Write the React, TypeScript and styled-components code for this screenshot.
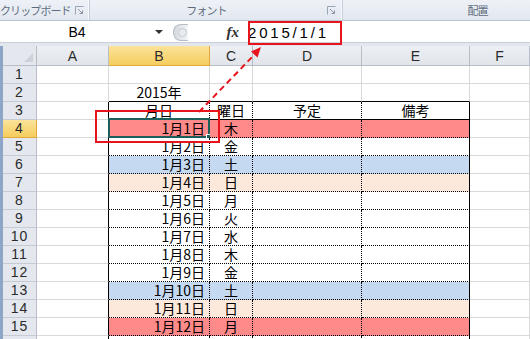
import React from "react";
import styled, { createGlobalStyle } from "styled-components";

const GlobalStyle = createGlobalStyle`
  html, body {
    margin: 0;
    padding: 0;
    background: #fff;
    overflow: hidden;
  }
`;

const Window = styled.div`
  position: relative;
  width: 530px;
  height: 339px;
  overflow: hidden;
  background: #fff;
  font-family: "Liberation Sans", "Noto Sans CJK JP", sans-serif;
`;

const Ribbon = styled.div`
  display: flex;
  height: 21px;
  box-sizing: border-box;
  background: linear-gradient(#eef2f7, #e2e8f0);
  border-bottom: 1px solid #b9c4d2;
  overflow: hidden;
`;

const RibbonGroup = styled.div<{ $w: number }>`
  flex: none;
  width: ${p => p.$w}px;
  display: flex;
  align-items: center;
  box-sizing: border-box;
  border-right: 1px solid #c3ccd8;
  box-shadow: inset -1px 0 0 #f7f9fc;
`;

const GroupLabel = styled.span`
  flex: 1;
  text-align: center;
  font-family: "Noto Sans CJK JP", sans-serif;
  font-size: 11px;
  letter-spacing: -0.9px;
  white-space: nowrap;
  color: #5f6c7e;
  line-height: 20px;
`;

const Launcher = styled.svg`
  flex: none;
  width: 9px;
  height: 9px;
  margin: 0 6px 0 4px;
`;

const FormulaBar = styled.div`
  display: flex;
  align-items: center;
  height: 25px;
  box-sizing: border-box;
  padding: 0 0 0 3px;
  background: #fff;
  border-bottom: 3px solid #e3e7ed;
  box-shadow: inset 0 -1px 0 #c9d0da;
`;

const NameBox = styled.div`
  display: flex;
  align-items: center;
  width: 170px;
  height: 18px;
  background: #fff;
`;

const NameText = styled.span`
  flex: 1;
  text-align: center;
  font-size: 14px;
  color: #000;
`;

const DropArrow = styled.span`
  width: 0;
  height: 0;
  margin: 0 10px 0 4px;
  border-left: 4px solid transparent;
  border-right: 4px solid transparent;
  border-top: 4px solid #333;
`;

const Splitter = styled.div`
  width: 14px;
  height: 15px;
  border-radius: 8px 0 0 8px;
  background: linear-gradient(90deg, #d4d9df, #f4f6f8);
  border: 1px solid #b6bec8;
  border-right: none;
  position: relative;
  &::after {
    content: "";
    position: absolute;
    left: 4px;
    top: 3px;
    width: 7px;
    height: 7px;
    border-radius: 50%;
    background: #e9ecef;
    border: 1px solid #c4cad2;
  }
`;

const FxLabel = styled.span`
  margin-left: auto;
  margin-right: -1px;
  font-family: "Liberation Serif", serif;
  font-style: italic;
  font-weight: bold;
  font-size: 15px;
  color: #333;
`;

const FormulaInput = styled.div`
  width: 282px;
  height: 18px;
  display: flex;
  align-items: center;
  padding-left: 10px;
  font-size: 15px;
  letter-spacing: 2.8px;
  color: #000;
`;

const Sheet = styled.div`
  display: grid;
  grid-template-columns: 34px 72px 101px 43px 109px 108px 60px;
  grid-auto-rows: 18px;
  grid-template-rows: 20px;
  border-left: 3px solid #8da5c6;
`;

const Corner = styled.div`
  position: relative;
  box-sizing: border-box;
  background: #e4e8ee;
  border-right: 1px solid #b7bec8;
  border-bottom: 1px solid #b7bec8;
  &::after {
    content: "";
    position: absolute;
    right: 3px;
    bottom: 3px;
    border-left: 9px solid transparent;
    border-bottom: 9px solid #cdd2d9;
  }
`;

const ColHeader = styled.div<{ $sel?: boolean }>`
  box-sizing: border-box;
  display: flex;
  align-items: center;
  justify-content: center;
  font-size: 14px;
  color: #2a2a2a;
  background: ${p => (p.$sel ? "linear-gradient(#fbe39a, #f6cd5e)" : "linear-gradient(#eceff3, #e1e5ea)")};
  border-right: 1px solid ${p => (p.$sel ? "#e0a93e" : "#b7bec8")};
  border-bottom: 1px solid ${p => (p.$sel ? "#e0a93e" : "#b7bec8")};
`;

const RowHeader = styled.div<{ $sel?: boolean }>`
  box-sizing: border-box;
  display: flex;
  align-items: center;
  justify-content: center;
  font-size: 14px;
  line-height: 17px;
  letter-spacing: 1px;
  overflow: hidden;
  color: #2a2a2a;
  background: ${p => (p.$sel ? "linear-gradient(#fbe39a, #f6cd5e)" : "#e4e8ee")};
  border-right: 1px solid ${p => (p.$sel ? "#e0a93e" : "#b7bec8")};
  border-bottom: 1px solid ${p => (p.$sel ? "#e0a93e" : "#c5cbd3")};
`;

type Line = "grid" | "dot" | "solid";
const lineCss = (l: Line) =>
  l === "solid" ? "1px solid #000" : l === "dot" ? "1px dotted #000" : "1px solid #d9d9d9";

const Cell = styled.div<{ $bg?: string; $r: Line; $b: Line; $align?: string }>`
  position: relative;
  box-sizing: border-box;
  display: flex;
  align-items: center;
  justify-content: ${p => p.$align ?? "flex-start"};
  padding: 0 4px 0 4px;
  font-family: "Noto Sans CJK JP", sans-serif;
  font-size: 14px;
  line-height: 17px;
  color: #000;
  white-space: nowrap;
  background: ${p => p.$bg ?? "#fff"};
  border-right: ${p => lineCss(p.$r)};
  border-bottom: ${p => lineCss(p.$b)};
`;

const Selection = styled.div`
  position: absolute;
  left: -1px;
  top: -2px;
  right: -1px;
  bottom: -1px;
  border: 2px solid #1d5f5a;
  pointer-events: none;
  &::after {
    content: "";
    position: absolute;
    right: -5px;
    bottom: -5px;
    width: 5px;
    height: 5px;
    background: #1d5f5a;
    border: 1px solid #fff;
  }
`;

const Overlay = styled.svg`
  position: absolute;
  left: 0;
  top: 0;
  width: 530px;
  height: 339px;
  pointer-events: none;
`;

const RED = "#ff8a8a";
const BLUE = "#c5d9f1";
const PEACH = "#fce9db";

const days = [
  { d: "1月1日", w: "木", bg: RED },
  { d: "1月2日", w: "金" },
  { d: "1月3日", w: "土", bg: BLUE },
  { d: "1月4日", w: "日", bg: PEACH },
  { d: "1月5日", w: "月" },
  { d: "1月6日", w: "火" },
  { d: "1月7日", w: "水" },
  { d: "1月8日", w: "木" },
  { d: "1月9日", w: "金" },
  { d: "1月10日", w: "土", bg: BLUE },
  { d: "1月11日", w: "日", bg: PEACH },
  { d: "1月12日", w: "月", bg: RED },
  // row 16: only its top edge shows in the window
  { d: "", w: "" },
];

const cols = ["A", "B", "C", "D", "E", "F"];

const LauncherIcon = () => (
  <Launcher viewBox="0 0 9 9">
    <path d="M0.5 8.5 V0.5 H8.5" fill="none" stroke="#9aa5b3" />
    <path d="M3 3 L7.5 7.5 M4.5 7.5 H7.5 V4.5" fill="none" stroke="#8a96a6" />
  </Launcher>
);

const renderRow = (r: number) => {
  const sel = r === 4;
  const cells: React.ReactNode[] = [
    <RowHeader key="h" $sel={sel}>{r < 16 ? r : ""}</RowHeader>,
  ];
  if (r <= 2) {
    cells.push(<Cell key="A" $r="grid" $b="grid" />);
    cells.push(
      <Cell key="B" $r="grid" $b={r === 2 ? "solid" : "grid"} $align="center">
        {r === 2 ? "2015年" : ""}
      </Cell>
    );
    ["C", "D", "E"].forEach(c =>
      cells.push(<Cell key={c} $r="grid" $b={r === 2 ? "solid" : "grid"} />)
    );
    cells.push(<Cell key="F" $r="grid" $b="grid" />);
    return cells;
  }
  if (r === 3) {
    cells.push(<Cell key="A" $r="solid" $b="grid" />);
    cells.push(<Cell key="B" $r="dot" $b="solid" $align="center">月日</Cell>);
    cells.push(<Cell key="C" $r="dot" $b="solid" $align="center">曜日</Cell>);
    cells.push(<Cell key="D" $r="dot" $b="solid" $align="center">予定</Cell>);
    cells.push(<Cell key="E" $r="solid" $b="solid" $align="center">備考</Cell>);
    cells.push(<Cell key="F" $r="grid" $b="grid" />);
    return cells;
  }
  const day = days[r - 4];
  cells.push(<Cell key="A" $r="solid" $b="grid" />);
  cells.push(
    <Cell key="B" $r="dot" $b="dot" $bg={day.bg} $align="flex-end">
      {day.d}
      {sel && <Selection />}
    </Cell>
  );
  cells.push(<Cell key="C" $r="dot" $b="dot" $bg={day.bg} $align="center">{day.w}</Cell>);
  cells.push(<Cell key="D" $r="dot" $b="dot" $bg={day.bg} />);
  cells.push(<Cell key="E" $r="solid" $b="dot" $bg={day.bg} />);
  cells.push(<Cell key="F" $r="grid" $b="grid" />);
  return cells;
};

export default function App() {
  const rows = Array.from({ length: 16 }, (_, i) => i + 1);
  return (
    <Window>
      <GlobalStyle />
      <Ribbon>
        <RibbonGroup $w={90}>
          <GroupLabel>クリップボード</GroupLabel>
          <LauncherIcon />
        </RibbonGroup>
        <RibbonGroup $w={253}>
          <GroupLabel>フォント</GroupLabel>
          <LauncherIcon />
        </RibbonGroup>
        <RibbonGroup $w={270}>
          <GroupLabel>配置</GroupLabel>
        </RibbonGroup>
      </Ribbon>

      <FormulaBar>
        <NameBox>
          <NameText>B4</NameText>
          <DropArrow />
        </NameBox>
        <Splitter />
        <FxLabel>fx</FxLabel>
        <FormulaInput>2015/1/1</FormulaInput>
      </FormulaBar>

      <Sheet>
        <Corner />
        {cols.map(c => (
          <ColHeader key={c} $sel={c === "B"}>{c}</ColHeader>
        ))}
        {rows.map(r => (
          <React.Fragment key={r}>{renderRow(r)}</React.Fragment>
        ))}
      </Sheet>

      <Overlay viewBox="0 0 530 339">
        <rect x="249" y="22" width="92" height="22" fill="none" stroke="#e8141c" strokeWidth="2" />
        <rect x="96" y="111" width="123" height="31" fill="none" stroke="#e8141c" strokeWidth="2" />
        <line x1="199" y1="112" x2="255" y2="54" stroke="#e8141c" strokeWidth="2" strokeDasharray="6 4" />
        <polygon points="261,47 257.5,57.5 251,51.5" fill="#e8141c" />
      </Overlay>
    </Window>
  );
}
